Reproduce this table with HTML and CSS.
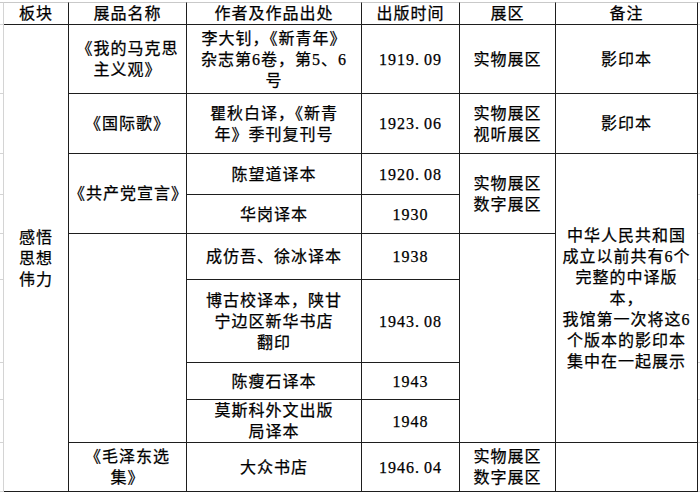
FILE: index.html
```html
<!DOCTYPE html>
<html lang="zh-CN">
<head>
<meta charset="utf-8">
<title>展品清单</title>
<link rel="stylesheet" href="styles.css">
</head>
<body>
<table class="sheet">
  <colgroup>
    <col class="c-gut">
    <col class="c-block">
    <col class="c-name">
    <col class="c-author">
    <col class="c-date">
    <col class="c-zone">
    <col class="c-note">
    <col class="c-gutr">
  </colgroup>
  <tr class="r-head">
    <td class="gut top"></td>
    <td class="top">板块</td>
    <td class="top">展品名称</td>
    <td class="top">作者及作品出处</td>
    <td class="top">出版时间</td>
    <td class="top">展区</td>
    <td class="top">备注</td>
    <td class="gutr top"></td>
  </tr>
  <tr class="r1">
    <td class="gut"></td>
    <td rowspan="9">感悟<br>思想<br>伟力</td>
    <td>《我的马克思<br>主义观》</td>
    <td>李大钊，《新青年》<br>杂志第6卷，第5、6<br>号</td>
    <td>1919<span class="dot">.</span>09</td>
    <td>实物展区</td>
    <td>影印本</td>
    <td class="gutr"></td>
  </tr>
  <tr class="r2">
    <td class="gut"></td>
    <td>《国际歌》</td>
    <td>瞿秋白译，《新青<br>年》季刊复刊号</td>
    <td>1923<span class="dot">.</span>06</td>
    <td>实物展区<br>视听展区</td>
    <td>影印本</td>
    <td class="gutr"></td>
  </tr>
  <tr class="r3">
    <td class="gut"></td>
    <td rowspan="2">《共产党宣言》</td>
    <td>陈望道译本</td>
    <td>1920<span class="dot">.</span>08</td>
    <td rowspan="2">实物展区<br>数字展区</td>
    <td rowspan="6">中华人民共和国<br>成立以前共有6个<br>完整的中译版<br>本，<br>我馆第一次将这6<br>个版本的影印本<br>集中在一起展示</td>
    <td class="gutr"></td>
  </tr>
  <tr class="r4">
    <td class="gut"></td>
    <td>华岗译本</td>
    <td>1930</td>
    <td class="gutr"></td>
  </tr>
  <tr class="r5">
    <td class="gut"></td>
    <td rowspan="4"></td>
    <td>成仿吾、徐冰译本</td>
    <td>1938</td>
    <td rowspan="4"></td>
    <td class="gutr"></td>
  </tr>
  <tr class="r6">
    <td class="gut"></td>
    <td>博古校译本，陕甘<br>宁边区新华书店<br>翻印</td>
    <td>1943<span class="dot">.</span>08</td>
    <td class="gutr"></td>
  </tr>
  <tr class="r7">
    <td class="gut"></td>
    <td>陈瘦石译本</td>
    <td>1943</td>
    <td class="gutr"></td>
  </tr>
  <tr class="r8">
    <td class="gut"></td>
    <td>莫斯科外文出版<br>局译本</td>
    <td>1948</td>
    <td class="gutr"></td>
  </tr>
  <tr class="r9">
    <td class="gut"></td>
    <td>《毛泽东选<br>集》</td>
    <td>大众书店</td>
    <td>1946<span class="dot">.</span>04</td>
    <td>实物展区<br>数字展区</td>
    <td></td>
    <td class="gutr"></td>
  </tr>
</table>
</body>
</html>
```
FILE: styles.css
```css
html, body {
  margin: 0;
  padding: 0;
  background: #ffffff;
}

.sheet {
  border-collapse: separate;
  border-spacing: 0;
  table-layout: fixed;
  width: 700px;
  margin-top: 2px;
  font-family: "Liberation Serif", "Noto Sans CJK SC", serif;
  font-size: 16px;
  line-height: 21px;
  letter-spacing: 1px;
  color: #000000;
  -webkit-text-stroke: 0.25px #000000;
}

.c-gut { width: 4px; }
.c-block { width: 65px; }
.c-name { width: 118px; }
.c-author { width: 175px; }
.c-date { width: 98px; }
.c-zone { width: 96px; }
.c-note { width: 142px; }
.c-gutr { width: 2px; }

.sheet td {
  padding: 0;
  text-align: center;
  vertical-align: middle;
  white-space: nowrap;
  overflow: hidden;
  border-right: 1px solid #1e1e1e;
  border-bottom: 1px solid #1e1e1e;
}

.sheet td.top {
  border-top: 1px solid #c9c9c9;
}

.sheet td.gut {
  border-right: 1px solid #d4d4d4;
  border-bottom: 1px solid #d4d4d4;
}

.sheet td.gutr {
  border-right: none;
  border-bottom: 1px solid #d4d4d4;
}

.dot {
  padding-right: 4px;
}

.r-head { height: 23px; }
.r1 { height: 69px; }
.r2 { height: 60px; }
.r3 { height: 41px; }
.r4 { height: 39px; }
.r5 { height: 46px; }
.r6 { height: 83px; }
.r7 { height: 37px; }
.r8 { height: 43px; }
.r9 { height: 49px; }
```
